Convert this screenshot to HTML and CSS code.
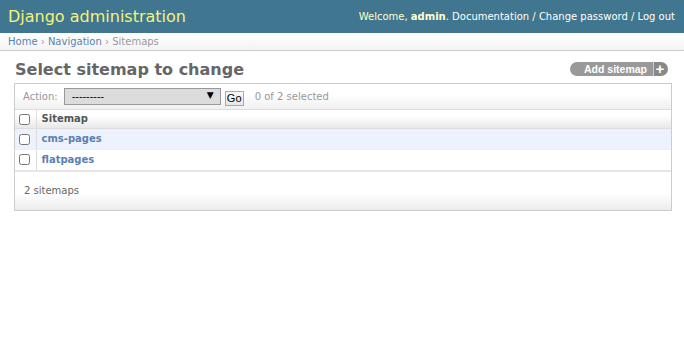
FILE: index.html
```html
<!DOCTYPE html>
<html lang="en">
<head>
    <meta charset="UTF-8">
    <title>Select sitemap to change | Django site admin</title>
    <link rel="stylesheet" href="styles.css">
</head>
<body>
    <div id="header">
        <div id="branding">Django administration</div>
        <div id="user-tools">
            Welcome, <strong>admin</strong>.
            <a href="#">Documentation</a> /
            <a href="#">Change password</a> /
            <a href="#">Log out</a>
        </div>
    </div>

    <div class="breadcrumbs">
        <a href="#">Home</a> &rsaquo; <a href="#">Navigation</a> &rsaquo; Sitemaps
    </div>

    <div id="content">
        <div class="title-row">
            <h1>Select sitemap to change</h1>
            <a href="#" class="addlink"><span class="addlink-text">Add sitemap</span><span class="addlink-plus">+</span></a>
        </div>

        <div id="changelist" class="module">
            <form>
                <div class="actions">
                    <label>Action:</label>
                    <span class="select-wrap">
                        <select name="action">
                            <option>---------</option>
                            <option>Delete selected sitemaps</option>
                        </select>
                        <span class="select-arrow">&#9660;</span>
                    </span>
                    <button type="button" class="go-button">Go</button>
                    <span class="action-counter">0 of 2 selected</span>
                </div>

                <table>
                    <thead>
                        <tr>
                            <th class="action-checkbox-column"><input type="checkbox"></th>
                            <th>Sitemap</th>
                        </tr>
                    </thead>
                    <tbody>
                        <tr class="row1">
                            <td class="action-checkbox"><input type="checkbox"></td>
                            <th><a href="#">cms-pages</a></th>
                        </tr>
                        <tr class="row2">
                            <td class="action-checkbox"><input type="checkbox"></td>
                            <th><a href="#">flatpages</a></th>
                        </tr>
                    </tbody>
                </table>

                <p class="paginator">2 sitemaps</p>
            </form>
        </div>
    </div>
</body>
</html>
```

FILE: styles.css
```css
* {
  box-sizing: border-box;
}

body {
  margin: 0;
  padding: 0;
  font-size: 12px;
  font-family: "DejaVu Sans", Verdana, sans-serif;
  color: #333;
  background: #fff;
}

a {
  color: #5b80b2;
  text-decoration: none;
}

/* Header */
#header {
  background: #417690;
  color: #ffc;
  height: 33px;
  display: flex;
  justify-content: space-between;
  align-items: center;
  padding: 0 9px 0 8px;
}

#branding {
  font-size: 16px;
  color: #f4f379;
  padding-bottom: 1px;
}

#user-tools {
  font-size: 10px;
  color: #ffc;
}

#user-tools a {
  color: #fff;
}

/* Breadcrumbs */
.breadcrumbs {
  height: 18px;
  padding: 2px 8px 0 8px;
  font-size: 10px;
  color: #999;
  border-top: 1px solid #fff;
  border-bottom: 1px solid #ccc;
  background: linear-gradient(#fff, #f3f3f3);
}

/* Content */
#content {
  margin: 9px 12px 10px 14px;
}

.title-row {
  display: flex;
  justify-content: space-between;
  align-items: flex-start;
  padding-left: 1px;
}

h1 {
  font-size: 16px;
  color: #666;
  margin: 0 0 3px 0;
  line-height: 20px;
}

.addlink {
  display: flex;
  margin-top: 2px;
  margin-right: 4px;
  font-family: "Liberation Sans", Arial, sans-serif;
  font-size: 10.5px;
  font-weight: bold;
  color: #fff;
  height: 14px;
}

.addlink-text {
  background: #999;
  border-radius: 7px 0 0 7px;
  padding: 0 6px 0 14px;
  line-height: 14px;
}

.addlink-plus {
  background: #888;
  border-left: 1px solid #ccc;
  border-radius: 0 7px 7px 0;
  width: 15px;
  font-size: 15px;
  line-height: 13px;
  text-align: center;
  padding-right: 2px;
}

.module {
  border: 1px solid #ccc;
  background: #fff;
}

/* Actions bar */
.actions {
  display: flex;
  align-items: center;
  height: 26px;
  padding: 0 3px;
  color: #999;
  font-size: 10px;
  border-bottom: 1px solid #ddd;
  background: linear-gradient(#fff 40%, #f0f0f0);
}

.actions label {
  margin: 0 6px 0 5px;
}

.select-wrap {
  position: relative;
  display: inline-block;
}

.select-wrap select {
  appearance: none;
  -webkit-appearance: none;
  width: 157px;
  height: 17px;
  border: 1px solid #999;
  background: #dcdcdc;
  font-family: "DejaVu Sans", Verdana, sans-serif;
  font-size: 10px;
  color: #000;
  padding: 0 0 0 7px;
  margin: 0;
  border-radius: 0;
}

.select-arrow {
  position: absolute;
  right: 7px;
  top: 2px;
  font-size: 9px;
  color: #000;
  pointer-events: none;
}

.go-button {
  margin: 3px 0 0 4px;
  height: 15px;
  width: 19px;
  padding: 0;
  border: 1px solid #aaa;
  background: linear-gradient(#fafafa, #e6e6e6);
  font-family: "Liberation Sans", Arial, sans-serif;
  font-size: 11px;
  color: #000;
  line-height: 13px;
}

.action-counter {
  margin-left: 11px;
}

/* Table */
table {
  border-collapse: collapse;
  width: 100%;
}

td, th {
  font-size: 10px;
  line-height: 13px;
  text-align: left;
  vertical-align: middle;
  padding: 2px 5px 3px 5px;
}

thead th {
  color: #555;
  height: 17px;
  background: linear-gradient(#fff 30%, #e8e8e8);
  border-bottom: 1px solid #ddd;
}

thead th + th {
  border-left: 1px solid #ddd;
}

tbody th {
  font-weight: bold;
}

tbody td, tbody th {
  height: 21px;
  border-bottom: 1px solid #eee;
}

tbody td + th {
  border-left: 1px solid #ddd;
}

tbody tr:last-child td, tbody tr:last-child th {
  border-bottom: 2px solid #e6e6e6;
}

tr.row1 td, tr.row1 th {
  background: #edf3fe;
}

.action-checkbox-column, .action-checkbox {
  width: 21px;
  padding: 0 0 0 4px;
}

input[type=checkbox] {
  margin: 0;
  width: 11px;
  height: 11px;
  display: block;
}

/* Paginator */
.paginator {
  margin: 0;
  height: 38px;
  padding: 11px 9px 0 9px;
  line-height: 16px;
  font-size: 10px;
  color: #666;
  background: linear-gradient(#fff 55%, #ececec);
}
```
